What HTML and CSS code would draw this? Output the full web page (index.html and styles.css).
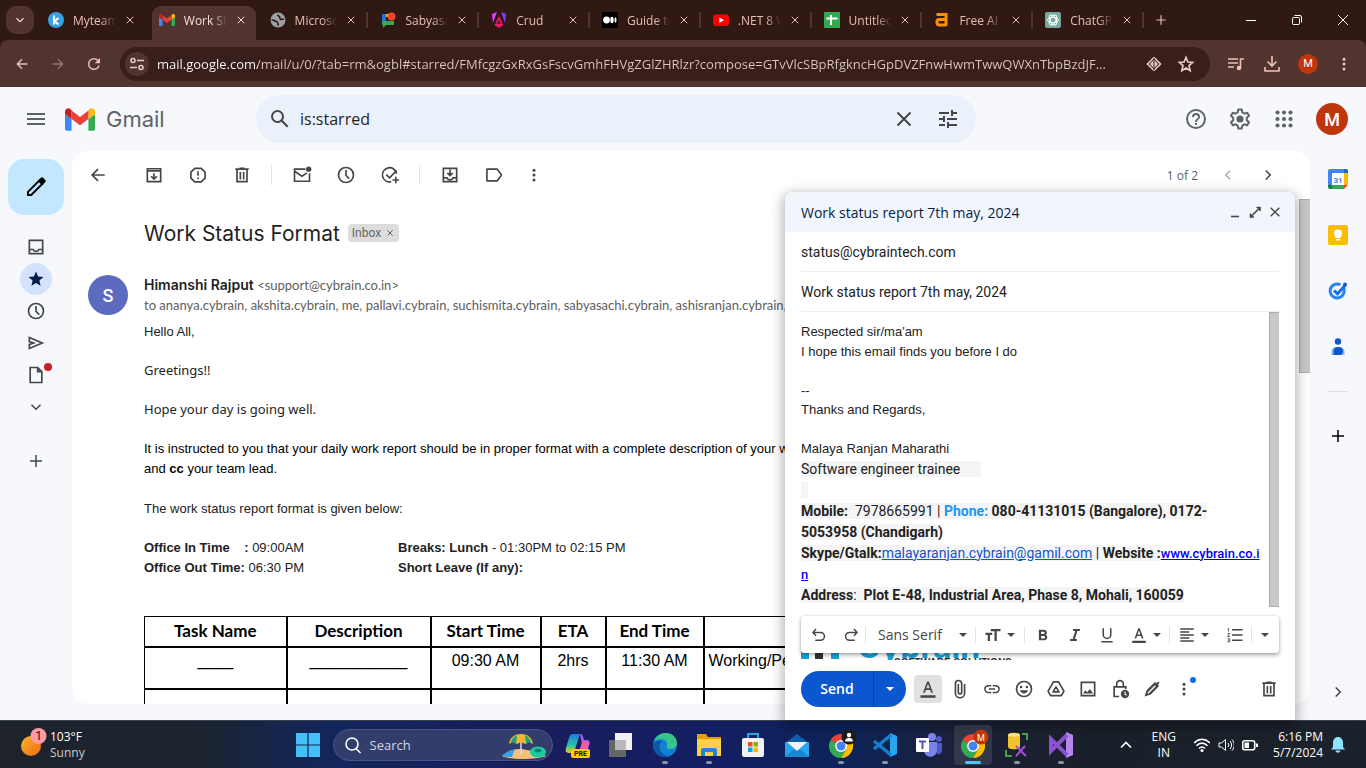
FILE: index.html
```html
<!DOCTYPE html>
<html lang="en">
<head>
<meta charset="utf-8">
<title>Work Status Format - Gmail</title>
<link rel="stylesheet" href="styles.css">
</head>
<body>
<svg class="defs" aria-hidden="true">
  <symbol id="x" viewBox="0 0 24 24"><path d="M5.5 5.5l13 13M18.5 5.5l-13 13" class="s"/></symbol>
  <symbol id="plus" viewBox="0 0 24 24"><path d="M12 4v16M4 12h16" class="s"/></symbol>
  <symbol id="back" viewBox="0 0 24 24"><path d="M20 12H5M12 5l-7 7 7 7" class="s"/></symbol>
  <symbol id="fwd" viewBox="0 0 24 24"><path d="M4 12h15M12 5l7 7-7 7" class="s"/></symbol>
  <symbol id="left" viewBox="0 0 24 24"><path d="M15 6l-6 6 6 6" class="s"/></symbol>
  <symbol id="right" viewBox="0 0 24 24"><path d="M9 6l6 6-6 6" class="s"/></symbol>
  <symbol id="down" viewBox="0 0 24 24"><path d="M6 9l6 6 6-6" class="s"/></symbol>
  <symbol id="caret" viewBox="0 0 10 10"><path d="M1 3h8L5 7z"/></symbol>
  <symbol id="dots" viewBox="0 0 24 24"><circle cx="12" cy="5.5" r="2"/><circle cx="12" cy="12" r="2"/><circle cx="12" cy="18.500" r="2"/></symbol>
  <symbol id="reload" viewBox="0 0 24 24"><path d="M17.65 6.35A7.96 7.96 0 0 0 12 4a8 8 0 1 0 7.730 10h-2.080A6 6 0 1 1 12 6c1.660 0 3.140.69 4.220 1.780L13 11h7V4z"/></symbol>
  <symbol id="menu" viewBox="0 0 24 24"><path d="M3 18h18v-2H3v2zm0-5h18v-2H3v2zm0-7v2h18V6H3z"/></symbol>
  <symbol id="search" viewBox="0 0 24 24"><path d="M20.490 19l-5.730-5.730A6.450 6.450 0 0 0 16 9.500 6.500 6.500 0 1 0 9.500 16c1.410 0 2.700-.47 3.770-1.240L19 20.490 20.490 19zM5 9.500a4.500 4.500 0 1 1 9 0 4.500 4.500 0 0 1-9 0z"/></symbol>
  <symbol id="tune" viewBox="0 0 24 24"><path d="M3 17v2h6v-2H3zM3 5v2h10V5H3zm10 16v-2h8v-2h-8v-2h-2v6h2zM7 9v2H3v2h4v2h2V9H7zm14 4v-2H11v2h10zm-6-4h2V7h4V5h-4V3h-2v6z"/></symbol>
  <symbol id="help" viewBox="0 0 24 24"><path d="M11 18h2v-2h-2v2zm1-16a10 10 0 1 0 0 20 10 10 0 0 0 0-20zm0 18a8 8 0 1 1 0-16 8 8 0 0 1 0 16zm0-14a4 4 0 0 0-4 4h2a2 2 0 1 1 4 0c0 2-3 1.750-3 5h2c0-2.250 3-2.500 3-5a4 4 0 0 0-4-4z"/></symbol>
  <symbol id="gear" viewBox="0 0 24 24"><path class="s" d="M10.200 2.600h3.600l.6 2.900 2 1.150 2.800-.95 1.800 3.100-2.200 2v2.400l2.200 2-1.800 3.100-2.800-.95-2 1.150-.6 2.900h-3.600l-.6-2.900-2-1.150-2.800.95L3 15.200l2.200-2v-2.400L3 8.800l1.800-3.100 2.800.95 2-1.150z" stroke-linejoin="round"/><circle cx="12" cy="12" r="3.600"/></symbol>
  <symbol id="apps" viewBox="0 0 24 24"><circle cx="5.500" cy="5.500" r="2.100"/><circle cx="12" cy="5.500" r="2.100"/><circle cx="18.500" cy="5.500" r="2.100"/><circle cx="5.500" cy="12" r="2.100"/><circle cx="12" cy="12" r="2.100"/><circle cx="18.500" cy="12" r="2.100"/><circle cx="5.500" cy="18.500" r="2.100"/><circle cx="12" cy="18.500" r="2.100"/><circle cx="18.500" cy="18.500" r="2.100"/></symbol>
  <symbol id="pencil" viewBox="0 0 24 24"><path class="s" d="M4 20v-3.200L15 5.800l3.200 3.200L7.200 20z"/><path d="M14 5.500l2.800-2.700c.8-.7 1.600-.7 2.300 0l2.100 2.100c.7.7.7 1.500 0 2.300L18.500 10z"/></symbol>
  <symbol id="archive" viewBox="0 0 24 24"><path class="s" d="M4 7v13h16V7M4 7V4.500h16V7zM12 10v7M8.500 13.500L12 17l3.500-3.500"/></symbol>
  <symbol id="spam" viewBox="0 0 24 24"><path class="s" d="M8.200 4h7.600L20.500 8.500v7.200L15.800 20.300H8.200L3.500 15.700V8.500zM12 7.500v5.500M12 15v2"/></symbol>
  <symbol id="trash" viewBox="0 0 24 24"><path class="s" d="M6 6v14h12V6M4 5h16M9 4h6M10 8.500v9M14 8.500v9"/></symbol>
  <symbol id="unread" viewBox="0 0 24 24"><path class="s" d="M16 5H3v14.500h18V10M3 7.500l9 6 6-4"/><circle cx="20" cy="5" r="3.200"/></symbol>
  <symbol id="clock" viewBox="0 0 24 24"><circle class="s" cx="12" cy="12" r="9"/><path class="s" d="M12 6v6.500l4 4"/></symbol>
  <symbol id="task" viewBox="0 0 24 24"><path class="s" d="M19.800 10.500A8.500 8.500 0 1 0 13.500 20M7.500 11.500l4 4L20 6.500M19 14v8M15 18h8"/></symbol>
  <symbol id="move" viewBox="0 0 24 24"><path class="s" d="M4 4h16v16H4zM4 15.500h4.500c1 3 6 3 7 0H20M12 5.500v7M8.800 9.500l3.200 3.200 3.200-3.200"/></symbol>
  <symbol id="label" viewBox="0 0 24 24"><path class="s" d="M3.500 5H16l5 7-5 7H3.500z" stroke-linejoin="round"/></symbol>
  <symbol id="inbox" viewBox="0 0 24 24"><path class="s" d="M4 4h16v16H4zM4 15h4.500c1 3 6 3 7 0H20"/></symbol>
  <symbol id="star" viewBox="0 0 24 24"><path d="M12 17.270L18.180 21l-1.640-7.030L22 9.240l-7.190-.61L12 2 9.190 8.630 2 9.240l5.460 4.730L5.820 21z"/></symbol>
  <symbol id="staro" viewBox="0 0 24 24"><path class="s" d="M12 16.800L17 20l-1.400-6L20 10.100l-5.700-.5L12 4.200 9.700 9.600 4 10.100 8.400 14 7 20z"/></symbol>
  <symbol id="sent" viewBox="0 0 24 24"><path class="s" d="M4 5.300L19.500 12 4 18.700v-5l5-1.700-5-1.700z"/></symbol>
  <symbol id="draft" viewBox="0 0 24 24"><path class="s" d="M5 3h9l5 5v13H5z"/><path d="M13 3v6h6z"/></symbol>
  <symbol id="undo" viewBox="0 0 24 24"><path class="s" d="M8 4L4 8.500 8 13M4.500 8.500H14a5 5 0 0 1 0 10.500H7"/></symbol>
  <symbol id="redo" viewBox="0 0 24 24"><path class="s" d="M16 4l4 4.500-4 4.500M19.500 8.500H10A5 5 0 0 0 10 19h7"/></symbol>
  <symbol id="size" viewBox="0 0 24 24"><path d="M9 4v3h5v13h3V7h5V4zM2 12h3v8h3v-8h3V9H2z"/></symbol>
  <symbol id="bold" viewBox="0 0 24 24"><path d="M15.600 11.700c1-.7 1.600-1.800 1.600-2.800C17.200 6.600 15.500 5 13.200 5H6.500v14h7.300c2.200 0 3.900-1.800 3.900-4 0-1.500-.8-2.700-2.100-3.300zM9.500 7.500h3.200a1.500 1.500 0 0 1 0 3H9.500zm3.700 9H9.500v-3.200h3.700a1.600 1.600 0 0 1 0 3.200z"/></symbol>
  <symbol id="italic" viewBox="0 0 24 24"><path d="M9.500 4v2.600h2.800L8.900 17.400H5.500V20h9v-2.600h-2.700l3.400-10.800h3.300V4z"/></symbol>
  <symbol id="under" viewBox="0 0 24 24"><path class="s" d="M7 3v8.500a5 5 0 0 0 10 0V3M4.500 21h15"/></symbol>
  <symbol id="color" viewBox="0 0 24 24"><path d="M3 19.500h18V22.500H3zM11 3L6 16.500h2.200l1.200-3.300h5.200l1.200 3.300H18L13 3zm-.9 8.200L12 5.700l1.900 5.500z"/></symbol>
  <symbol id="align" viewBox="0 0 24 24"><path class="s" d="M3 4h18M3 8h12M3 12h18M3 16h12M3 20h18"/></symbol>
  <symbol id="list" viewBox="0 0 24 24"><path class="s" d="M8 5h14M8 12h14M8 19h14"/><path fill="none" stroke="currentColor" stroke-width="1.200" d="M2 3.500h1.500V7.500M2 10h3l-3 4h3M2 17h3v4H2M3 19h2"/></symbol>
  <symbol id="clip" viewBox="0 0 24 24"><path class="s" d="M17.500 6v11a5 5 0 0 1-11 0V5.500a3.500 3.500 0 0 1 7.500 0V16a2 2 0 0 1-4 0V6"/></symbol>
  <symbol id="link" viewBox="0 0 24 24"><path class="s" d="M11 7.500H7a4.500 4.500 0 0 0 0 9h4M13 7.500h4a4.500 4.500 0 0 1 0 9h-4M8 12h8"/></symbol>
  <symbol id="emoji" viewBox="0 0 24 24"><circle class="s" cx="12" cy="12" r="9"/><circle cx="8.500" cy="9.500" r="1.500"/><circle cx="15.500" cy="9.500" r="1.500"/><path d="M7 13.500h10c-1.500 5-8.500 5-10 0z"/></symbol>
  <symbol id="drive" viewBox="0 0 24 24"><path class="s" stroke-linejoin="round" d="M9 3.500h6l6.500 11-3 5.500h-13l-3-5.500zM12 9.500l-3.500 6h7z"/></symbol>
  <symbol id="image" viewBox="0 0 24 24"><path class="s" d="M4 4h16v16H4z"/><path d="M6 17.500l3-4 2.200 2.500 3-4 4 5.500z"/></symbol>
  <symbol id="lock" viewBox="0 0 24 24"><path class="s" d="M11 21H5V9.500h14V12M8 9V6a4 4 0 0 1 8 0v3"/><circle cx="18" cy="18" r="5"/><path d="M18 15v3.300l2 1.200" stroke="#fff" fill="none" stroke-width="1.300"/></symbol>
  <symbol id="pen" viewBox="0 0 24 24"><path d="M3 21l2.500-7.500L15.500 3.500l1.800 1.700L19 3.500c.8-.8 2.500.8 1.700 1.700L19 7l1.500 1.500L10.500 18.500z"/><path d="M7 17l9-9" stroke="#fff" stroke-width="1.600"/></symbol>
  <symbol id="win" viewBox="0 0 24 24"><path d="M0 0h11.400v11.400H0zM12.600 0H24v11.400H12.600zM0 12.600h11.400V24H0zM12.600 12.600H24V24H12.600z" fill="#45bff8"/></symbol>
  <symbol id="chrome" viewBox="0 0 24 24"><path fill="#ea4335" d="M12 12L1.600 6A12 12 0 0 1 22.400 6z"/><path fill="#34a853" d="M12 12L1.600 6A12 12 0 0 0 12 24l5.200-9z"/><path fill="#fbbc04" d="M12 6h10.400A12 12 0 0 1 12 24l5.200-9z"/><circle cx="12" cy="12" r="5.900" fill="#fff"/><circle cx="12" cy="12" r="4.500" fill="#4285f4"/></symbol>
  <symbol id="gmail" viewBox="0 0 32 24"><path fill="#4285f4" d="M2 24h5V11.500L0 6.500V22c0 1.100.9 2 2 2z"/><path fill="#34a853" d="M25 24h5c1.100 0 2-.9 2-2V6.500l-7 5z"/><path fill="#fbbc04" d="M25 2.500v9l7-5V3.400c0-3-3.300-4.500-5.600-2.800z"/><path fill="#ea4335" d="M7 11.500v-9l9 6.700 9-6.700v9L16 18.200z"/><path fill="#c5221f" d="M0 3.400v3.100l7 5v-9L5.600.6C3.300-1.100 0 .4 0 3.400z"/></symbol>
</svg>

<header class="tabs">
  <button class="tabmenu" aria-label="Search tabs"><svg class="i16"><use href="#down"/></svg></button>
  <nav class="tablist" aria-label="Open tabs">
    <div class="tab"><svg class="i16" viewBox="0 0 16 16"><circle cx="8" cy="8" r="8" fill="#37a0e8"/><path d="M6 3.500v9M10.500 6L6.500 9.200l4 3.300" fill="none" stroke="#fff" stroke-width="2"/></svg><a href="#">Myteams</a><button aria-label="Close tab"><svg><use href="#x"/></svg></button></div>
    <div class="tab active"><svg class="i16"><use href="#gmail"/></svg><a href="#">Work Status</a><button aria-label="Close tab"><svg><use href="#x"/></svg></button></div>
    <div class="tab"><svg class="i16" viewBox="0 0 16 16"><circle cx="8" cy="8" r="7.500" fill="#9aa0a6"/><path d="M1.500 8c3-.5 3 1.500 5 1.500s1 2.500 2 4M8 2.500c-1 2 2.500 1.500 2 3.500s2 1.500 4 1" fill="none" stroke="#301813" stroke-width="1.600"/></svg><a href="#">Microsoft</a><button aria-label="Close tab"><svg><use href="#x"/></svg></button></div>
    <div class="tab"><svg class="i16" viewBox="0 0 16 16"><path fill="#1a73e8" d="M2 2h4v7H2z"/><path fill="#34a853" d="M2 9h12v4H6l-3 3v-3H2z"/><path fill="#fbbc04" d="M6 2h4v3H6z"/><circle cx="11.500" cy="4.500" r="4" fill="#f44336"/></svg><a href="#">Sabyasachi</a><button aria-label="Close tab"><svg><use href="#x"/></svg></button></div>
    <div class="tab"><svg class="i16" viewBox="0 0 16 16"><path fill="#e040fb" d="M6 0L1 2l1 9z"/><path fill="#7c3cff" d="M10 0l5 2-1 9z"/><path fill="#f0186a" d="M8 4l3.500 7h-2L8 8l-1.500 3h-2zM3.500 13L8 16l4.500-3-1-1.500h-7z"/></svg><a href="#">Crud</a><button aria-label="Close tab"><svg><use href="#x"/></svg></button></div>
    <div class="tab"><svg class="i16" viewBox="0 0 16 16"><path fill="#000" d="M0 0h16v16H0z"/><circle cx="4.500" cy="8" r="3.400" fill="#fff"/><ellipse cx="10" cy="8" rx="1.700" ry="3.200" fill="#fff"/><ellipse cx="13.500" cy="8" rx="1" ry="2.800" fill="#fff"/></svg><a href="#">Guide to</a><button aria-label="Close tab"><svg><use href="#x"/></svg></button></div>
    <div class="tab"><svg class="i16" viewBox="0 0 16 16"><rect y="2.500" width="16" height="11.500" rx="3" fill="#f00"/><path d="M6.300 5.500v5.500L11 8.200z" fill="#fff"/></svg><a href="#">.NET 8 Web</a><button aria-label="Close tab"><svg><use href="#x"/></svg></button></div>
    <div class="tab"><svg class="i16" viewBox="0 0 16 16"><rect width="16" height="16" rx="1" fill="#34a853"/><path d="M7 3v10M2.500 6.500h11" stroke="#fff" stroke-width="2"/></svg><a href="#">Untitled</a><button aria-label="Close tab"><svg><use href="#x"/></svg></button></div>
    <div class="tab"><svg class="i16" viewBox="0 0 16 16"><path d="M2.500 2.500H12V14M12 7.500H5.500C2 7.500 2 13 5.500 13H12" fill="none" stroke="#ff8f00" stroke-width="3"/></svg><a href="#">Free AI T</a><button aria-label="Close tab"><svg><use href="#x"/></svg></button></div>
    <div class="tab"><svg class="i16" viewBox="0 0 16 16"><rect width="16" height="16" rx="2" fill="#74aa9c"/><g fill="none" stroke="#fff"><ellipse cx="8" cy="8" rx="5.500" ry="2.800"/><ellipse cx="8" cy="8" rx="5.500" ry="2.800" transform="rotate(60 8 8)"/><ellipse cx="8" cy="8" rx="5.500" ry="2.800" transform="rotate(120 8 8)"/></g></svg><a href="#">ChatGPT</a><button aria-label="Close tab"><svg><use href="#x"/></svg></button></div>
  </nav>
  <button class="newtab" aria-label="New tab"><svg class="i14"><use href="#plus"/></svg></button>
  <div class="winctl">
    <button aria-label="Minimize"><svg class="i10" viewBox="0 0 10 10"><path d="M0 5.500h10" class="t"/></svg></button>
    <button aria-label="Restore"><svg class="i10" viewBox="0 0 10 10"><rect x=".5" y="2.500" width="7" height="7" rx="1" class="t"/><path d="M2.500.5H8A1.500 1.500 0 0 1 9.500 2v5.500" class="t"/></svg></button>
    <button aria-label="Close"><svg class="i10" viewBox="0 0 10 10"><path d="M0 0l10 10M10 0L0 10" class="t"/></svg></button>
  </div>
</header>

<div class="nav">
  <div class="navbtns">
    <button aria-label="Back"><svg class="i16"><use href="#back"/></svg></button>
    <button class="dim" aria-label="Forward"><svg class="i16"><use href="#fwd"/></svg></button>
    <button aria-label="Reload"><svg class="i18"><use href="#reload"/></svg></button>
  </div>
  <div class="omni">
    <button class="site" aria-label="View site information"><svg class="i14" viewBox="0 0 14 14"><path d="M7 3.500h7M0 10.500h7" class="w"/><circle cx="3" cy="3.500" r="2" class="w"/><circle cx="11" cy="10.500" r="2" class="w"/></svg></button>
    <input class="url" aria-label="Address and search bar" value="mail.google.com/mail/u/0/?tab=rm&amp;ogbl#starred/FMfcgzGxRxGsFscvGmhFHVgZGlZHRlzr?compose=GTvVlcSBpRfgkncHGpDVZFnwHwmTwwQWXnTbpBzdJF...">
    <button aria-label="Page tools"><svg class="i16" viewBox="0 0 16 16"><path d="M8 1.500L1.500 8 8 14.500M8 1.500L14.500 8 8 14.500" class="w"/><path d="M8 3.500L4 8l4 4.500L12 8z"/><path d="M8 2v12" stroke="#381f1b" stroke-width="1"/></svg></button>
    <button aria-label="Bookmark this tab"><svg class="i20"><use href="#staro"/></svg></button>
  </div>
  <div class="exts">
    <button aria-label="Media"><svg class="i18" viewBox="0 0 18 18"><path d="M1 4h10M1 8h10M1 12h6M13.500 13V4H17" class="w"/><circle cx="12" cy="13" r="2.300"/></svg></button>
    <button aria-label="Downloads"><svg class="i18" viewBox="0 0 18 18"><path d="M9 1v9M4.500 6.500L9 11l4.500-4.500M2 12v4h14v-4" class="w"/></svg></button>
    <button class="me" aria-label="Profile">M</button>
    <button aria-label="Menu"><svg class="i18"><use href="#dots"/></svg></button>
  </div>
</div>

<main class="gm">
  <header class="top">
    <button class="burger" aria-label="Main menu"><svg class="i24"><use href="#menu"/></svg></button>
    <a class="logo" href="#"><svg><use href="#gmail"/></svg><span>Gmail</span></a>
    <form class="find">
      <button type="button" aria-label="Search"><svg class="i24"><use href="#search"/></svg></button>
      <input aria-label="Search mail" value="is:starred">
      <button type="button" aria-label="Clear search"><svg class="i24"><use href="#x"/></svg></button>
      <button type="button" aria-label="Search options"><svg class="i24"><use href="#tune"/></svg></button>
    </form>
    <div class="acct">
      <button aria-label="Support"><svg class="i24"><use href="#help"/></svg></button>
      <button aria-label="Settings"><svg class="i24"><use href="#gear"/></svg></button>
      <button aria-label="Google apps"><svg class="i24"><use href="#apps"/></svg></button>
      <button class="ava" aria-label="Account">M</button>
    </div>
  </header>

  <div class="mid">
    <nav class="rail">
      <button class="write" aria-label="Compose"><svg class="i24"><use href="#pencil"/></svg></button>
      <a href="#" aria-label="Inbox"><svg class="i20"><use href="#inbox"/></svg></a>
      <a href="#" class="on" aria-label="Starred"><svg class="i18"><use href="#star"/></svg></a>
      <a href="#" aria-label="Snoozed"><svg class="i20"><use href="#clock"/></svg></a>
      <a href="#" aria-label="Sent"><svg class="i20"><use href="#sent"/></svg></a>
      <a href="#" class="drafts" aria-label="Drafts"><svg class="i20"><use href="#draft"/></svg></a>
      <a href="#" aria-label="More"><svg class="i18"><use href="#down"/></svg></a>
      <a href="#" class="add" aria-label="Create label"><svg class="i18"><use href="#plus"/></svg></a>
    </nav>

    <section class="panel">
      <div class="bar">
        <button aria-label="Back to list"><svg class="i20"><use href="#back"/></svg></button>
        <span class="grp">
          <button aria-label="Archive"><svg class="i20"><use href="#archive"/></svg></button>
          <button aria-label="Report spam"><svg class="i20"><use href="#spam"/></svg></button>
          <button aria-label="Delete"><svg class="i20"><use href="#trash"/></svg></button>
        </span>
        <span class="grp line">
          <button aria-label="Mark as unread"><svg class="i20"><use href="#unread"/></svg></button>
          <button aria-label="Snooze"><svg class="i20"><use href="#clock"/></svg></button>
          <button aria-label="Add to tasks"><svg class="i20"><use href="#task"/></svg></button>
        </span>
        <span class="grp line">
          <button aria-label="Move to"><svg class="i20"><use href="#move"/></svg></button>
          <button aria-label="Labels"><svg class="i20"><use href="#label"/></svg></button>
          <button class="slim" aria-label="More"><svg class="i18"><use href="#dots"/></svg></button>
        </span>
        <span class="count">1 of 2</span>
        <button class="pg off" aria-label="Newer"><svg class="i18"><use href="#left"/></svg></button>
        <button class="pg" aria-label="Older"><svg class="i18"><use href="#right"/></svg></button>
      </div>
      <div class="view">
        <article class="msg">
          <div class="subj"><h2>Work Status Format</h2><span class="chip">Inbox <button aria-label="Remove label"><svg><use href="#x"/></svg></button></span></div>
          <div class="from">
            <span class="face">S</span>
            <div class="who"><div><b>Himanshi Rajput</b> <span class="addr">&lt;support@cybrain.co.in&gt;</span></div>
            <div class="to">to ananya.cybrain, akshita.cybrain, me, pallavi.cybrain, suchismita.cybrain, sabyasachi.cybrain, ashisranjan.cybrain, sabita.cybrain</div></div>
          </div>
          <div class="text">
            <p>Hello All,</p>
            <p class="wide">Greetings!!</p>
            <p class="wide">Hope your day is going well.</p>
            <p class="ink">It is instructed to you that your daily work report should be in proper format with a complete description of your work<br>and <span class="cc">cc</span> your team lead.</p>
            <p>The work status report format is given below:</p>
            <div class="times">
              <span><b>Office In Time&nbsp;&nbsp;&nbsp; :</b> 09:00AM</span><span><b>Breaks: Lunch</b> - 01:30PM to 02:15 PM</span>
              <span><b>Office Out Time:</b> 06:30 PM</span><span><b>Short Leave (If any):</b></span>
            </div>
            <table>
              <colgroup><col class="c0"><col class="c1"><col class="c2"><col class="c3"><col class="c4"><col class="c5"></colgroup>
              <thead><tr><th>Task Name</th><th>Description</th><th>Start Time</th><th>ETA</th><th>End Time</th><th></th></tr></thead>
              <tbody>
                <tr><td>____</td><td>___________</td><td>09:30 AM</td><td>2hrs</td><td>11:30 AM</td><td class="l">Working/Pending</td></tr>
                <tr><td></td><td></td><td></td><td></td><td></td><td></td></tr>
              </tbody>
            </table>
          </div>
        </article>
        <div class="thumb"></div>
      </div>
    </section>

    <aside class="side">
      <a href="#" aria-label="Calendar"><svg class="i20" viewBox="0 0 20 20"><path fill="#4285f4" d="M0 2a2 2 0 0 1 2-2h14v4H4v12H0z"/><path fill="#1967d2" d="M16 0h2a2 2 0 0 1 2 2v2h-4z"/><path fill="#fbbc04" d="M16 4h4v12h-4z"/><path fill="#34a853" d="M4 16h12v4H4z"/><path fill="#188038" d="M0 16h4v4H2a2 2 0 0 1-2-2z"/><path fill="#ea4335" d="M16 16h4l-4 4z"/><path fill="#fff" d="M4 4h12v12H4z"/><text x="10" y="13.500" text-anchor="middle" class="cal">31</text></svg></a>
      <a href="#" aria-label="Keep"><svg class="i20" viewBox="0 0 20 20"><rect width="20" height="20" rx="2" fill="#fbbc04"/><circle cx="10" cy="8.500" r="4" fill="#fff"/><path fill="#fff" d="M7.500 10h5v3h-5zM8 14h4v1.500H8z"/></svg></a>
      <a href="#" aria-label="Tasks"><svg class="i20" viewBox="0 0 20 20"><path d="M15.500 7a7 7 0 1 1-3-3.200" fill="none" stroke="#2684fc" stroke-width="3"/><path d="M6 9.500l3.500 3.300L17 4.500" fill="none" stroke="#1a6fe8" stroke-width="3"/><circle cx="17" cy="3.500" r="1.900" fill="#0757c9"/></svg></a>
      <a href="#" aria-label="Contacts"><svg class="i20" viewBox="0 0 20 20"><circle cx="10" cy="4.500" r="3.200" fill="#0b57d0"/><path d="M3.500 18v-3c0-3 2-5 5-5h3c3 0 5 2 5 5v3z" fill="#8ab4f8"/><path d="M5.500 18v-4c0-2 1.500-4 4.500-4s5 2 5 4-1 4-3 4z" fill="#0b57d0"/></svg></a>
      <hr>
      <a href="#" class="addon" aria-label="Get add-ons"><svg class="i18"><use href="#plus"/></svg></a>
      <button class="hide" aria-label="Hide side panel"><svg class="i18"><use href="#right"/></svg></button>
    </aside>
  </div>

  <section class="compose" aria-label="New message">
    <header>
      <h3>Work status report 7th may, 2024</h3>
      <button aria-label="Minimize"><svg class="i14" viewBox="0 0 14 14"><path d="M3 11.500h8" class="w"/></svg></button>
      <button aria-label="Full screen"><svg class="i14" viewBox="0 0 14 14"><path d="M8.500 2.500h3.500V6M12 2.500L2.500 12M2.500 8.500V12H6" class="w"/></svg></button>
      <button aria-label="Close"><svg class="i16"><use href="#x"/></svg></button>
    </header>
    <input class="fld" aria-label="To" value="status@cybraintech.com">
    <input class="fld" aria-label="Subject" value="Work status report 7th may, 2024">
    <div class="edit">
      <div class="doc" role="textbox" aria-label="Message body" contenteditable="true" spellcheck="false">
        <div>Respected sir/ma'am</div><div>I hope this email finds you before I do</div><div><br></div><div>--</div><div>Thanks and Regards,</div><div><br></div><div>Malaya Ranjan Maharathi</div>
        <div class="sig">
          <div><span class="hl">Software engineer trainee&nbsp; &nbsp; &nbsp;&nbsp;</span></div>
          <div><span class="hl">&nbsp;&nbsp;</span></div>
          <div><span class="hl"><b>Mobile:</b>&nbsp; 7978665991 | <b class="ph">Phone:</b> <b>080-41131015 (Bangalore), 0172-<br>5053958 (Chandigarh)</b></span></div>
          <div><span class="hl"><b>Skype/Gtalk:</b><a class="em" href="#">malayaranjan.cybrain@gamil.com</a> | <b>Website :</b></span><a class="web" href="#">www.cybrain.co.i<br>n</a></div>
          <div><span class="hl"><b>Address</b>:&nbsp; <b>Plot E-48, Industrial Area, Phase 8, Mohali, 160059</b></span></div>
        </div>
        <svg class="brand" viewBox="0 0 220 60"><path fill="#1ba1d8" d="M0 24h8v29H0zM30 24h8v29h-8z"/><path fill="#333" d="M14 24h8v29h-8z"/><text x="56" y="52" class="b1">Cybrain</text><text x="93" y="60" class="b2">SOFTWARE SOLUTIONS</text></svg>
      </div>
      <div class="thumb"></div>
      <div class="fmt">
        <button aria-label="Undo"><svg class="i20"><use href="#undo"/></svg></button>
        <button aria-label="Redo"><svg class="i20"><use href="#redo"/></svg></button>
        <label class="face-sel line"><select aria-label="Font"><option>Sans Serif</option></select><svg class="i10"><use href="#caret"/></svg></label>
        <button class="duo line" aria-label="Size"><svg class="i20"><use href="#size"/></svg><svg class="i10"><use href="#caret"/></svg></button>
        <span class="trio line">
        <button aria-label="Bold"><svg class="i20"><use href="#bold"/></svg></button>
        <button aria-label="Italic"><svg class="i20"><use href="#italic"/></svg></button>
        <button aria-label="Underline"><svg class="i20"><use href="#under"/></svg></button>
        <button class="duo" aria-label="Text color"><svg class="i18"><use href="#color"/></svg><svg class="i10"><use href="#caret"/></svg></button></span>
        <button class="duo line" aria-label="Align"><svg class="i20"><use href="#align"/></svg><svg class="i10"><use href="#caret"/></svg></button>
        <button class="num" aria-label="Numbered list"><svg class="i18"><use href="#list"/></svg></button>
        <button class="line last" aria-label="More formatting"><svg class="i10"><use href="#caret"/></svg></button>
      </div>
    </div>
    <footer>
      <span class="send"><button>Send</button><button class="opt" aria-label="More send options"><svg class="i10"><use href="#caret"/></svg></button></span>
      <button class="sel" aria-label="Formatting options"><svg class="i20"><use href="#color"/></svg></button>
      <button aria-label="Attach files"><svg class="i20"><use href="#clip"/></svg></button>
      <button aria-label="Insert link"><svg class="i18"><use href="#link"/></svg></button>
      <button aria-label="Insert emoji"><svg class="i20"><use href="#emoji"/></svg></button>
      <button aria-label="Insert from Drive"><svg class="i20"><use href="#drive"/></svg></button>
      <button aria-label="Insert photo"><svg class="i20"><use href="#image"/></svg></button>
      <button aria-label="Confidential mode"><svg class="i20"><use href="#lock"/></svg></button>
      <button aria-label="Insert signature"><svg class="i20"><use href="#pen"/></svg></button>
      <button class="more" aria-label="More options"><svg class="i18"><use href="#dots"/></svg></button>
      <button class="bin" aria-label="Discard draft"><svg class="i20"><use href="#trash"/></svg></button>
    </footer>
  </section>
</main>

<footer class="task">
  <button class="wx"><svg viewBox="0 0 26 30"><defs><linearGradient id="sun" x1="0" y1="0" x2="1" y2="1"><stop offset="0" stop-color="#f9b52c"/><stop offset="1" stop-color="#f06a10"/></linearGradient></defs><circle cx="10" cy="18" r="10" fill="url(#sun)"/><circle cx="17.500" cy="8" r="8" fill="#ff9aa2"/><text x="17.500" y="12" text-anchor="middle" class="n1">1</text></svg><span>103°F<br><em>Sunny</em></span></button>
  <div class="apps">
    <button aria-label="Start"><svg class="i24"><use href="#win"/></svg></button>
    <label class="tsearch"><svg class="i18" viewBox="0 0 18 18"><circle cx="8" cy="8" r="6" class="w"/><path d="M12 12.500l4.500 4.500" class="w"/></svg><input aria-label="Search" placeholder="Search"><svg class="beach" viewBox="0 0 46 28"><path d="M1 25c8-7 16-8 25-6 8 1 14 3 19 6-10 4-36 4-44 0z" fill="#f6c177"/><path d="M1 25c4-4 8-6 13-7l-3 8c-4 0-8 0-10-1z" fill="#35a0e8"/><path d="M20 3v20" stroke="#dde" stroke-width="1.500"/><path d="M8 13c1-7 6-10 12-10s11 3 12 10l-4-2-4 2-4-2-4 2-4-2z" fill="#f7b52c"/><path d="M16 4c-4 2-6 5-6 8l2-1 3 2zM24 4c4 2 6 5 6 8l-2-1-3 2z" fill="#12a389"/><ellipse cx="37" cy="21" rx="8" ry="5.500" fill="#1fc8a0"/><ellipse cx="37" cy="19.500" rx="3.500" ry="1.800" fill="#0b7f77"/></svg></label>
    <button aria-label="Copilot"><svg class="i28" viewBox="0 0 28 28"><defs><linearGradient id="cp" x1="0" y1="0" x2="0" y2="1"><stop offset="0" stop-color="#1b78e8"/><stop offset=".6" stop-color="#2bc4a0"/><stop offset="1" stop-color="#f3c41e"/></linearGradient></defs><path fill="url(#cp)" d="M9 3h8l-5 15c-1 3-3 4-5 4-4 0-5-2-4-5l3-10c1-3 2-4 3-4z"/><path fill="#b45ae6" d="M17 3c3 0 3 3 4 6h3c3 0 3 3 2 5l-2 8h-7l2-9z"/><path fill="#ef6191" d="M19 11h5c3 0 2 3 1 5l-1 5h-8z"/><rect x="8" y="18" width="19" height="9" rx="2" fill="#fc0"/><text x="17.500" y="25" text-anchor="middle" class="pre">PRE</text></svg></button>
    <button aria-label="Task view"><svg class="i28" viewBox="0 0 28 28"><path fill="#f1f1f1" d="M8 2h17v17H8z"/><path fill="#666" d="M2 9h17v17H2z"/><path fill="#b9b9b9" d="M8 9h11v10H8z"/></svg></button>
    <button class="run" aria-label="Edge"><svg class="i28" viewBox="0 0 28 28"><circle cx="14" cy="14" r="12" fill="#1380d6"/><path fill="#35c48a" d="M3 10C6 3 12 2 15 2c7 0 11 5 11 10 0 4-3 6-7 6-3 0-4-1-3-3 2-6-7-9-13-5z"/><path fill="#0c56a6" d="M9 13c-2 9 6 14 13 11-8 5-20 1-20-10 1-4 5-5 9-4z"/></svg></button>
    <button class="run" aria-label="File Explorer"><svg class="i28" viewBox="0 0 28 28"><path fill="#e0a100" d="M2 3h9l2 3h13v8H2z"/><path fill="#ffcf48" d="M2 8h24v17H2z"/><path fill="#1a87d8" d="M6 25v-6c0-1 1-2 2-2h12c1 0 2 1 2 2v6h-4v-4h-8v4z"/></svg></button>
    <button aria-label="Store"><svg class="i28" viewBox="0 0 28 28"><path d="M9 9V3h10v6" fill="none" stroke="#2ba3e8" stroke-width="2"/><rect x="3" y="7" width="22" height="19" rx="2" fill="#f2f2f2"/><path fill="#f25022" d="M9 11h4.500v4.500H9z"/><path fill="#7fba00" d="M14.500 11H19v4.500h-4.500z"/><path fill="#00a4ef" d="M9 16.500h4.500V21H9z"/><path fill="#ffb900" d="M14.500 16.500H19V21h-4.500z"/></svg></button>
    <button aria-label="Mail"><svg class="i28" viewBox="0 0 28 28"><path fill="#0f5fa8" d="M2 12L14 3l12 9z"/><path fill="#2aa4ea" d="M2 11h24v15H2z"/><path fill="#eef3f8" d="M4 11h20L14 20z"/><path fill="#1a87d4" d="M2 26l9-8 3 2 3-2 9 8z"/></svg></button>
    <button class="run" aria-label="Chrome"><svg class="i28" viewBox="0 0 28 28"><use href="#chrome" x="2" y="3" width="24" height="24"/><circle cx="22" cy="6" r="7.500" fill="#1b1b1b"/><circle cx="22" cy="4" r="2.200" fill="#fff"/><path fill="#fff" d="M18 10.500c0-5 8-5 8 0z"/></svg></button>
    <button class="run" aria-label="VS Code"><svg class="i28" viewBox="0 0 28 28"><path fill="#2aa5ee" d="M19 2l7 3v18l-7 3z"/><path fill="none" stroke="#1180cf" stroke-width="3.500" d="M20 4L3 18M3 10l17 14"/></svg></button>
    <button aria-label="Teams"><svg class="i28" viewBox="0 0 28 28"><circle cx="17" cy="6" r="4" fill="#7b83eb"/><circle cx="24" cy="8" r="3" fill="#5059c9"/><path fill="#7b83eb" d="M9 11h13v8c0 9-13 9-13 0z"/><path fill="#5059c9" d="M22 12h5v7c0 3-2 5-5 4z"/><rect x="1" y="7" width="13" height="14" rx="1" fill="#fff"/><path d="M4 10.500h7M7.500 10.500V18" stroke="#4b53bc" stroke-width="2"/></svg></button>
    <button class="run cur" aria-label="Chrome, Gmail"><svg class="i28" viewBox="0 0 28 28"><use href="#chrome" x="2" y="3" width="24" height="24"/><circle cx="22" cy="6" r="7.500" fill="#bf360c"/><text x="22" y="9.500" text-anchor="middle" class="m">M</text></svg></button>
    <button class="run" aria-label="SQL Server Management Studio"><svg class="i28" viewBox="0 0 28 28"><path fill="#f2c32c" d="M5 4c0-3 12-3 12 0v12c0 3-12 3-12 0z"/><ellipse cx="11" cy="4" rx="6" ry="1.800" fill="#ffe48a"/><path d="M19 3h5v6M3 19v6h6" fill="none" stroke="#49a048" stroke-width="2"/><path d="M13 15l10 10M22 15L13 25" stroke="#a34fd0" stroke-width="2"/></svg></button>
    <button class="run" aria-label="Visual Studio"><svg class="i28" viewBox="0 0 28 28"><path fill="#b884f0" d="M19 1l7 3v20l-7 3z"/><path fill="none" stroke="#8a52cf" stroke-width="4" d="M20 4L4 20V8l16 16"/></svg></button>
  </div>
  <div class="tray">
    <button aria-label="Show hidden icons"><svg class="i16" viewBox="0 0 16 16"><path d="M3 10.500l5-5 5 5" class="w"/></svg></button>
    <button class="lang">ENG<br>IN</button>
    <button class="sys" aria-label="Network, volume, battery"><svg class="i16" viewBox="0 0 16 16"><path d="M0 6c5-5 11-5 16 0M2.500 8.800c3.500-3.500 7.500-3.500 11 0M5 11.500c2-2 4-2 6 0" class="w"/><circle cx="8" cy="13.500" r="1.500"/></svg><svg class="i16" viewBox="0 0 16 16"><path d="M1 6h2.500L7.500 2.500v11L3.500 10H1zM10 6c1 1.500 1 2.500 0 4M12 4c2 2.500 2 5.500 0 8M14 2.500c3 3.500 3 7.500 0 11" class="t"/></svg><svg class="i16" viewBox="0 0 16 16"><rect x=".7" y="3.700" width="12" height="9" rx="2" class="w"/><path d="M2.500 5.500H7V11H2.500zM14 6.500h2v3.500h-2z"/></svg></button>
    <button class="when">6:16 PM<br>5/7/2024</button>
    <button aria-label="Notifications"><svg class="i16 bell" viewBox="0 0 16 16"><path d="M8 0c3 0 5 2.500 5 5.500V10l2 2.500H1L3 10V5.500C3 2.500 5 0 8 0zM5.500 13.500h5C10 16.500 6 16.500 5.500 13.500z"/></svg></button>
  </div>
</footer>
</body>
</html>
```
FILE: styles.css
```css
* { box-sizing: border-box; }
html, body { height: 100%; margin: 0; }
body { display: flex; flex-direction: column; overflow: hidden; font-family: Roboto, "Open Sans", sans-serif; color: #1f1f1f; background: #301813; }
button, input, select { font: inherit; color: inherit; border: 0; background: none; padding: 0; margin: 0; outline: 0; min-width: 0; }
button { display: flex; align-items: center; justify-content: center; flex: none; }
a { color: inherit; text-decoration: none; }
svg { fill: currentColor; flex: none; display: block; }
.defs { position: absolute; width: 0; height: 0; }
.s, .w { fill: none; stroke: currentColor; stroke-width: 2; }
.w { stroke-width: 1.6; }
.t { fill: none; stroke: currentColor; stroke-width: 1; }
.i10 { width: 10px; height: 10px; }
.i14 { width: 14px; height: 14px; }
.i16 { width: 16px; height: 16px; }
.i18 { width: 18px; height: 18px; }
.i20 { width: 20px; height: 20px; }
.i24 { width: 24px; height: 24px; }
.i28 { width: 28px; height: 28px; overflow: visible; }

/* browser tabs */
.tabs { flex: none; display: flex; height: 40px; color: #e9bdb4; font: 12px "Open Sans", sans-serif; align-items: center; }
.tabmenu { width: 28px; height: 28px; margin: 0 7px 0 6px; border-radius: 10px; background: #51332f; color: #f4dcd6; }
.tabmenu .i16 { width: 14px; height: 14px; }
.tablist { display: flex; flex: 0 1 1108px; min-width: 0; align-self: stretch; }
.tab { flex: 1 1 0; min-width: 0; display: flex; align-items: center; padding: 0 12px 0 7px; position: relative; }
.tab a { flex: 1; margin-left: 9px; overflow: hidden; white-space: nowrap; -webkit-mask-image: linear-gradient(90deg, #000 65%, transparent); mask-image: linear-gradient(90deg, #000 65%, transparent); }
.tab button { width: 20px; height: 20px; margin-left: 4px; }
.tab button svg { width: 12px; height: 12px; }
.tab + .tab + .tab::after { content: ""; position: absolute; right: 5px; top: 12px; width: 2px; height: 16px; background: #51332f; }
.tab.active { color: #f7ded8; }
.tab.active::before { content: ""; position: absolute; inset: 6px 7px 0 0; border-radius: 9px 9px 0 0; background: #51332f; }
.tab.active > * { position: relative; }
.newtab { width: 24px; height: 24px; }
.winctl { display: flex; margin-left: auto; color: #fff; }
.winctl button { width: 46px; height: 40px; }

/* address bar */
.nav { flex: none; height: 47px; display: flex; align-items: center; background: #51332f; color: #f0c1b7; border-radius: 8px 8px 0 0; }
.navbtns { display: flex; gap: 8px; padding: 0 8px; width: 120px; }
.navbtns button { width: 28px; height: 28px; }
.dim { opacity: .45; }
.omni { flex: 1; min-width: 0; height: 34px; border-radius: 17px; background: #381f1b; display: flex; align-items: center; padding: 0 8px 0 5px; color: #e4cdc7; }
.omni button { width: 32px; height: 32px; }
.omni .site { width: 24px; height: 24px; border-radius: 50%; background: #51332f; margin-right: 8px; }
.url { flex: 1; font: 13px "Open Sans", sans-serif; text-overflow: ellipsis; color: transparent; background: linear-gradient(90deg, #fff 101px, #dcc7c2 101px); -webkit-background-clip: text; background-clip: text; }
.exts { display: flex; gap: 8px; padding: 0 8px 0 12px; }
.exts button { width: 28px; height: 28px; }
.exts .me { width: 20px; height: 20px; margin: 4px; border-radius: 50%; background: #bf360c; color: #fff; font-size: 11px; }

/* mail */
.gm { flex: 1; min-height: 0; display: flex; flex-direction: column; background: #f6f8fc; position: relative; color: #444746; }
.top { flex: none; height: 64px; display: flex; align-items: center; color: #5f6368; }
.burger { width: 48px; height: 48px; margin-left: 12px; }
.logo { display: flex; align-items: center; gap: 11px; margin-left: 5px; width: 191px; font: 22px Inter, sans-serif; }
.logo svg { width: 30px; height: 23px; }
.find { flex: 0 1 720px; height: 48px; border-radius: 24px; background: #eaf1fb; display: flex; align-items: center; padding: 0 8px 0 4px; color: #444746; }
.find button { width: 40px; height: 40px; }
.find button + button { margin-left: 4px; }
.find input { flex: 1; font: 16px "Open Sans", sans-serif; color: #1f1f1f; }
.acct { margin-left: auto; padding-right: 18px; display: flex; align-items: center; gap: 4px; }
.acct button { width: 40px; height: 40px; }
.acct .ava { width: 32px; height: 32px; margin-left: 8px; border-radius: 50%; background: #bf360c; color: #fff; font-size: 18px; font-weight: 500; }
.mid { flex: 1; min-height: 0; display: flex; padding-bottom: 16px; }
.rail { width: 72px; flex: none; display: flex; flex-direction: column; align-items: center; padding-top: 8px; }
.rail a { width: 32px; height: 32px; border-radius: 50%; display: flex; align-items: center; justify-content: center; position: relative; }
.rail .on { background: #d3e3fd; color: #041e49; }
.rail .add { margin-top: 22px; }
.write { width: 56px; height: 56px; border-radius: 16px; background: #c2e7ff; color: #000; margin-bottom: 16px; }
.drafts::after { content: ""; position: absolute; right: 0; top: 4px; width: 8px; height: 8px; border-radius: 50%; background: #c5221f; }
.panel { flex: 1; min-width: 0; background: #fff; border-radius: 16px; overflow: hidden; display: flex; flex-direction: column; }
.bar { flex: none; height: 48px; display: flex; align-items: center; padding: 0 22px 0 6px; }
.bar button { width: 40px; height: 40px; }
.grp { display: flex; gap: 4px; margin-left: 16px; align-items: center; }
.grp.line { margin-left: 9px; padding-left: 11px; }
.line { position: relative; }
.line::before { content: ""; position: absolute; left: 0; top: 10px; bottom: 10px; width: 1px; background: #e3e3e3; }
.bar .slim { width: 32px; }
.count { margin-left: auto; padding-right: 10px; font: 12px "Open Sans", sans-serif; color: #5e5e5e; }
.off { opacity: .45; }
.view { flex: 1; min-height: 0; display: flex; }
.msg { flex: 1; min-width: 0; padding: 20px 0 0 16px; overflow: hidden; }
.thumb { width: 11px; height: 174px; background: #c8c8c8; border: solid #adadad; border-width: 1px 0 1px 1px; }
.subj { display: flex; align-items: center; gap: 8px; padding-left: 56px; height: 28px; }
h2 { margin: 0; font: 21px Inter, sans-serif; color: #1f1f1f; }
.chip { display: flex; align-items: center; gap: 4px; height: 18px; padding: 0 4px; border-radius: 4px; background: #ddd; color: #666; font: 12px Roboto, sans-serif; }
.chip svg { width: 10px; height: 10px; color: #444; }
.from { display: flex; gap: 16px; margin-top: 28px; }
.face { width: 40px; height: 40px; flex: none; border-radius: 50%; background: #5c6bc0; color: #fff; font-size: 18px; font-weight: 500; display: flex; align-items: center; justify-content: center; }
.who { flex: 1; min-width: 0; line-height: 20px; white-space: nowrap; overflow: hidden; font-size: 13px; font-family: Lato, sans-serif; color: #5e5e5e; }
.who b { font: 600 14px/20px Inter, sans-serif; color: #1f1f1f; }
.text { padding: 7px 0 0 56px; font: 13px/19px "Liberation Sans", Arial, sans-serif; color: #222; }
p { margin: 0 0 20px; white-space: nowrap; }
.wide { font-family: "Noto Sans", sans-serif; }
.ink { color: #000; line-height: 20px; }
.cc { font-weight: 700; }
.times { display: grid; grid-template-columns: 254px 1fr; line-height: 20px; margin-bottom: 38px; }
table { border-collapse: collapse; table-layout: fixed; width: 898px; color: #000; }
th, td { border: 2px solid #000; padding: 0; font: 16px/20px "Liberation Sans", Arial, sans-serif; text-align: center; vertical-align: top; }
th { font: 700 17px/28px Lato, sans-serif; height: 30px; }
td { height: 42px; padding-top: 3px; }
.l { text-align: left; padding-left: 4px; }
tr > :first-child { border-left-width: 1px; }
thead th { border-top-width: 1px; }
.c0 { width: 142px; } .c1 { width: 144px; } .c2 { width: 110px; } .c3 { width: 65px; } .c4 { width: 98px; } .c5 { width: 339px; }
.side { width: 56px; flex: none; display: flex; flex-direction: column; align-items: center; padding-top: 18px; }
.side a { height: 20px; margin-bottom: 36px; }
.side hr { width: 20px; margin: -2px 0 35px; border: 0; border-top: 1px solid #dadce0; }
.side .addon { color: #000; }
.hide { margin-top: auto; margin-bottom: 3px; }
.cal { font: 700 8px Roboto, sans-serif; fill: #4285f4; }

/* compose window */
.compose { position: absolute; right: 71px; bottom: 0; width: 510px; height: 528px; display: flex; flex-direction: column; background: #fff; border-radius: 8px 8px 0 0; box-shadow: 0 4px 12px 3px rgba(0,0,0,.28); font: 14px "Open Sans", sans-serif; }
.compose header { flex: none; height: 40px; display: flex; align-items: center; padding: 0 12px 0 16px; background: #f2f6fc; border-radius: 8px 8px 0 0; }
h3 { flex: 1; margin: 0; font: 14px "Open Sans", sans-serif; color: #041e49; }
.compose header button { width: 16px; height: 20px; margin-left: 4px; }
.fld { flex: none; height: 40px; margin: 0 16px; border-bottom: 1px solid #eceff1; color: #222; font-family: Roboto, sans-serif; }
.edit { flex: 1; min-height: 0; margin: 0 16px; position: relative; display: flex; }
.doc { flex: 1; min-width: 0; overflow: hidden; outline: 0; font: 13px/1.5 "Liberation Sans", Arial, sans-serif; color: #222; padding-top: 10px; white-space: nowrap; }
.edit .thumb { width: 10px; height: 295px; }
.sig { font: 14px/21px Roboto, sans-serif; }
.hl { background: #f5f5f5; }
.ph { color: #2196f3; }
.em { color: #1155cc; text-decoration: underline; }
.web { font-size: 13px; line-height: 18px; color: #00e; text-decoration: underline; font-weight: 500; }
.brand { width: 220px; height: 60px; overflow: visible; }
.b1 { font: 700 32px Inter, sans-serif; fill: #1ba1d8; }
.b2 { font: 700 10px "Liberation Sans", sans-serif; fill: #333; }
.fmt { position: absolute; left: 0; right: 0; bottom: 7px; height: 37px; background: #fff; border-radius: 3px; box-shadow: 0 2px 4px rgba(0,0,0,.35), 0 0 1px rgba(0,0,0,.3); display: flex; align-items: center; padding-left: 2px; }
.fmt button { width: 32px; height: 37px; }
.fmt .i20, .fmt .i18 { width: 18px; height: 18px; }
.face-sel { display: flex; align-items: center; justify-content: space-between; padding: 0 7px 0 13px; width: 113px; margin-left: -2px; height: 37px; }
.face-sel select { appearance: none; width: 74px; }
.fmt .duo { width: 49px; gap: 4px; }
.trio { display: flex; padding-left: 3px; }
.trio .duo { width: 46px; }
.fmt .num { width: 33px; }
.fmt .last { width: 28px; }
.compose footer { flex: none; height: 60px; display: flex; align-items: center; padding: 0 10px 3px 16px; }
.compose footer button { width: 32px; height: 32px; position: relative; }
.compose .send { display: flex; height: 36px; border-radius: 18px; background: #0b57d0; color: #fff; overflow: hidden; margin-right: 8px; font-weight: 600; }
.compose .send button { width: 72px; height: 36px; }
.compose .send .opt { width: 33px; border-left: 1px solid #0842a0; }
.compose footer .sel { width: 28px; height: 28px; margin-right: 2px; border-radius: 4px; background: #e1e1e1; }
.more::after { content: ""; position: absolute; right: 4px; top: 4px; width: 6px; height: 6px; border-radius: 50%; background: #0b6ef0; }
.compose footer .bin { margin-left: auto; }

/* taskbar */
.task { flex: none; height: 48px; display: grid; grid-template-columns: 1fr auto 1fr; align-items: center; border-top: 1px solid #3a4150; background: linear-gradient(90deg, #1e232b 0, #1b2430 15%, #12265c 24%, #191d5c 40%, #131f63 52%, #0d2358 62%, #1b2138 70%, #1a2029 80%, #1c222c 100%); color: #fff; font: 12px/16px "Open Sans", sans-serif; }
.wx { justify-self: start; gap: 3px; padding-left: 21px; text-align: left; }
.wx svg { width: 26px; height: 30px; margin-bottom: 4px; }
.wx em { font-style: normal; color: #c8cbd0; }
.n1 { font: 12px Roboto, sans-serif; fill: #111; }
.apps { display: flex; align-items: center; padding-left: 2px; }
.apps button { width: 44px; height: 48px; position: relative; }
.tsearch { width: 220px; height: 32px; margin: 0 2px 0 3px; display: flex; align-items: center; gap: 8px; padding: 0 5px 0 10px; border-radius: 16px; border: 1px solid #4a5483; background: #323d6c; }
.tsearch input { flex: 1; font-size: 13px; }
.tsearch input::placeholder { color: #d3d6e4; opacity: 1; }
.tsearch .beach { width: 46px; height: 28px; }
.pre { font: 700 7px Roboto, sans-serif; fill: #111; }
.m { font: 9px Roboto, sans-serif; fill: #fff; }
.run::after { content: ""; position: absolute; bottom: 5px; left: 19px; width: 6px; height: 3px; border-radius: 2px; background: #8d93a5; }
.cur::before { content: ""; position: absolute; inset: 4px 3px; border-radius: 4px; background: rgba(255,255,255,.1); }
.cur svg { position: relative; }
.cur::after { left: 14px; width: 16px; background: #4cc2ff; }
.tray { justify-self: end; display: flex; align-items: center; padding-right: 20px; }
.tray button { text-align: center; }
.lang { margin: 0 18px; }
.sys { gap: 8px; }
.tray .when { text-align: right; margin: 0 7px 0 15px; }
.bell { color: #8fe3ff; }
```
